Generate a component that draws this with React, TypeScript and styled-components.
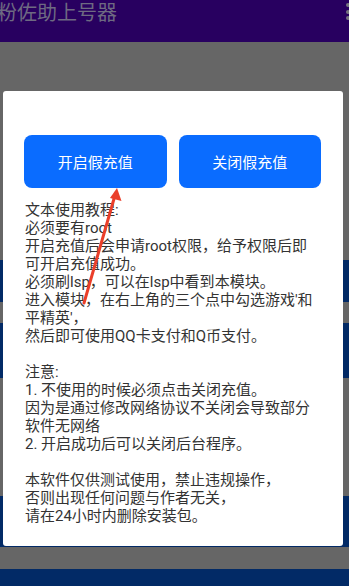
import React from "react";
import styled, { createGlobalStyle } from "styled-components";

const Global = createGlobalStyle`
  html, body { margin: 0; padding: 0; }
  body { width: 349px; height: 586px; overflow: hidden; background: #666666; font-family: Roboto, "Noto Sans CJK SC", sans-serif; }
`;

const Screen = styled.div`
  position: relative;
  width: 349px;
  height: 586px;
  overflow: hidden;
  background: #666666;
`;

const AppBar = styled.div`
  height: 42px;
  background: #280060;
  display: flex;
  justify-content: space-between;
  align-items: flex-start;
`;

const Title = styled.div`
  margin-left: -3px;
  font-family: "Noto Sans CJK SC", sans-serif;
  font-size: 20px;
  line-height: 24px;
  color: #6e6a82;
`;

const Dots = styled.div`
  display: flex;
  flex-direction: column;
  gap: 2.5px;
  padding: 3px 0 0;
  margin-right: -1px;
`;

const Dot = styled.span`
  width: 4px;
  height: 4px;
  border-radius: 50%;
  background: #77767f;
`;

const Page = styled.div`
  display: flex;
  flex-direction: column;
`;

const Band = styled.div<{ $top: number; $h: number }>`
  margin-top: ${(p) => p.$top}px;
  height: ${(p) => p.$h}px;
  background: #022a66;
`;

const Dialog = styled.div`
  position: absolute;
  left: 3px;
  top: 91px;
  width: 340px;
  height: 455px;
  box-sizing: border-box;
  background: #ffffff;
  border-radius: 3px;
  padding: 44px 22px 0 21px;
  display: flex;
  flex-direction: column;
`;

const Buttons = styled.div`
  display: flex;
  gap: 12px;
`;

const Button = styled.div`
  flex: 1;
  height: 53px;
  border-radius: 8px;
  background: #0a6cff;
  color: #ffffff;
  font-family: "Noto Sans CJK SC", sans-serif;
  font-size: 15px;
  display: flex;
  align-items: center;
  justify-content: center;
`;

const Body = styled.div`
  margin-top: 13px;
  margin-left: 1px;
  font-family: Roboto, "Noto Sans CJK SC", sans-serif;
  font-size: 15px;
  line-height: 18px;
  color: #333333;
`;

const Line = styled.div`
  white-space: nowrap;
  min-height: 18px;
`;

const Arrow = styled.svg`
  position: absolute;
  left: 0;
  top: 0;
  pointer-events: none;
`;

const lines = [
  "文本使用教程:",
  "必须要有root",
  "开启充值后会申请root权限，给予权限后即",
  "可开启充值成功。",
  "必须刷lsp，可以在lsp中看到本模块。",
  "进入模块，在右上角的三个点中勾选游戏'和",
  "平精英'，",
  "然后即可使用QQ卡支付和Q币支付。",
  "",
  "注意:",
  "1. 不使用的时候必须点击关闭充值。",
  "因为是通过修改网络协议不关闭会导致部分",
  "软件无网络",
  "2. 开启成功后可以关闭后台程序。",
  "",
  "本软件仅供测试使用，禁止违规操作，",
  "否则出现任何问题与作者无关，",
  "请在24小时内删除安装包。",
];

export default function App() {
  return (
    <>
      <Global />
      <Screen>
        <AppBar>
          <Title>粉佐助上号器</Title>
          <Dots>
            <Dot />
            <Dot />
            <Dot />
          </Dots>
        </AppBar>
        <Page>
          <Band $top={218} $h={42} />
          <Band $top={21} $h={55} />
          <Band $top={118} $h={51} />
          <Band $top={22} $h={30} />
        </Page>
        <Dialog>
          <Buttons>
            <Button>开启假充值</Button>
            <Button>关闭假充值</Button>
          </Buttons>
          <Body>
            {lines.map((l, i) => (
              <Line key={i}>{l}</Line>
            ))}
          </Body>
        </Dialog>
        <Arrow width="349" height="586" viewBox="0 0 349 586">
          <line x1="84" y1="303" x2="114.5" y2="197" stroke="#ea3f2a" strokeWidth="3" strokeLinecap="round" />
          <polygon points="117,188 121.5,201 110,198" fill="#ea3f2a" />
        </Arrow>
      </Screen>
    </>
  );
}
